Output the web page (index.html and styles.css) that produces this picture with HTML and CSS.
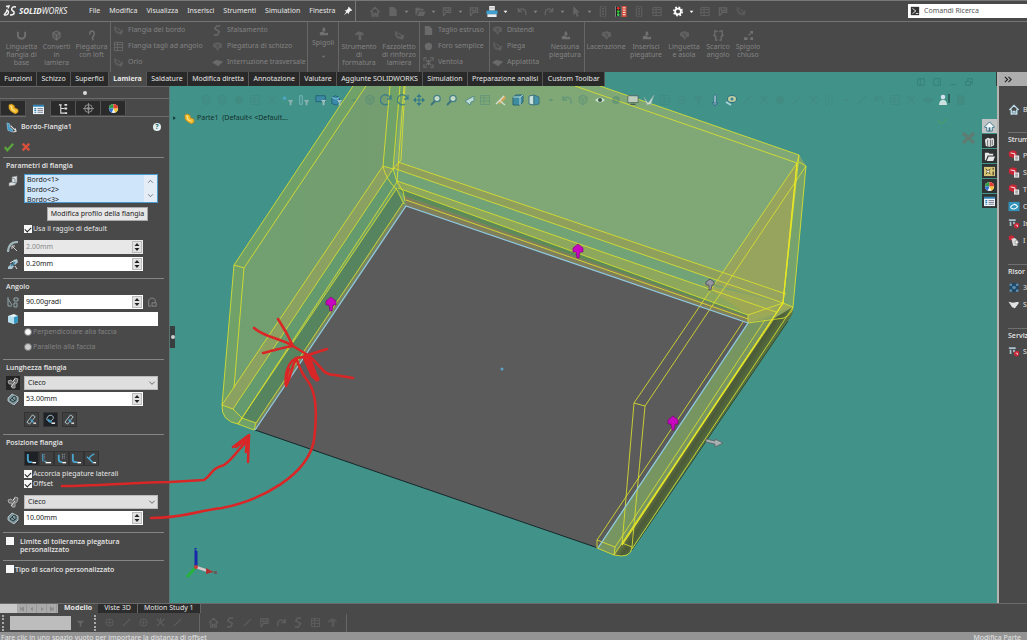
FILE: index.html
```html
<!DOCTYPE html>
<html lang="it">
<head>
<meta charset="utf-8">
<title>SOLIDWORKS</title>
<link rel="stylesheet" href="styles.css">
</head>
<body>
<svg class="defs" aria-hidden="true">
  <symbol id="arr" viewBox="0 0 12 12"><path d="M3.500 5h5L6 8z" fill="currentColor"/></symbol>
  <symbol id="home" viewBox="0 0 12 12"><path d="M1 6.500 6 1.500l5 5M3 6v5h2V8h2v3h2V6" fill="none" stroke="currentColor" stroke-width="1.500"/></symbol>
  <symbol id="file" viewBox="0 0 12 12"><path d="M2 1h5l3 3v7H2z" fill="currentColor"/></symbol>
  <symbol id="open" viewBox="0 0 12 12"><path d="M1 2h4l1 1h4v2H4l-2 5H1zM5 6h7l-2 5H3z" fill="currentColor"/></symbol>
  <symbol id="save" viewBox="0 0 12 12"><path d="M2 10V2h8v5H5L2 11M4 3v2h4V3" fill="none" stroke="currentColor" stroke-width="1.300"/></symbol>
  <symbol id="printer" viewBox="0 0 12 12"><path d="M3 0h6v5H3z" fill="#f4f4f4"/><path d="M0 5h12v4H0z" fill="#3f9fd0"/><path d="M1 9h10v3H1z" fill="#e8eef2"/><path d="M4 1.500h4M4 3h4" stroke="#999" stroke-width=".6"/></symbol>
  <symbol id="undo" viewBox="0 0 12 12"><path d="M2 2v4h4M2 6c3-5 9-3 8 4" fill="none" stroke="currentColor" stroke-width="1.500"/></symbol>
  <symbol id="redo" viewBox="0 0 12 12"><path d="M10 2v4H6M10 6C7 1 1 3 2 10" fill="none" stroke="currentColor" stroke-width="1.500"/></symbol>
  <symbol id="cursor" viewBox="0 0 12 12"><path d="M3 0v10l2.500-2L7 12l2-1-2-4h3z" fill="currentColor"/></symbol>
  <symbol id="lamp" viewBox="0 0 12 12"><rect x="3" y="0" width="6" height="12" rx="2" fill="none" stroke="currentColor"/><circle cx="6" cy="3" r="1" fill="currentColor"/><circle cx="6" cy="6" r="1" fill="currentColor"/><circle cx="6" cy="9" r="1" fill="currentColor"/></symbol>
  <symbol id="traffic" viewBox="0 0 14 12"><rect x="1" y="0" width="6" height="12" rx="1" fill="#1e1e1e" stroke="#bbb" stroke-width=".6"/><circle cx="4" cy="2.500" r="1.500" fill="#e33"/><circle cx="4" cy="6" r="1.500" fill="#3c3"/><circle cx="4" cy="9.500" r="1.500" fill="#4c5"/><rect x="8" y="0" width="5" height="12" fill="#d34b3c"/><path d="M9 2h3M9 4.500h3M9 7h3M9 9.500h3" stroke="#ffe" stroke-width="1"/></symbol>
  <symbol id="sheet" viewBox="0 0 12 12"><path d="M1.500 1.500h9v9h-9zM5 1v10M1 4h9M1 7h9" fill="none" stroke="currentColor"/></symbol>
  <symbol id="gear" viewBox="0 0 12 12"><circle cx="6" cy="6" r="3.200" fill="none" stroke="#fff" stroke-width="2"/><circle cx="6" cy="6" r="4.700" fill="none" stroke="#fff" stroke-width="1.600" stroke-dasharray="1.850 1.850"/></symbol>
  <symbol id="pin" viewBox="0 0 12 12"><path d="M7 1l4 4-1 1-1-.3L7 8v2L2 5h2l2.400-2.200L6 2zM4 7l1 1-4 3z" fill="#f4f4f4"/></symbol>
  <symbol id="blob" viewBox="0 0 12 12"><path d="M2 3l4-2 4 2v5l-4 3-4-3zM2 3l4 2 4-2M6 5v6" fill="currentColor" fill-opacity=".4" stroke="currentColor"/></symbol>
  <symbol id="bend" viewBox="0 0 12 12"><path d="M1 1l3 1v4l6 3v2L3 9 1 5z" fill="currentColor" fill-opacity=".5"/><path d="M5 3l5 5M10 5v3H7" fill="none" stroke="currentColor"/></symbol>
  <symbol id="corner" viewBox="0 0 12 12"><path d="M6 1l2 2v3H5V3zM2 7l3-1 3 2 3-1v3H2z" fill="currentColor"/></symbol>
  <symbol id="tear" viewBox="0 0 12 12"><path d="M1 3l5-2 5 2v4l-3 1-2 3-2-3-3-2z" fill="currentColor" fill-opacity=".6"/><path d="M4 4l3 1-1 3" fill="none" stroke="#494949"/></symbol>
  <symbol id="step" viewBox="0 0 12 12"><path d="M9 1H5L3 4l5 3-2 4H2" fill="none" stroke="currentColor" stroke-width="1.600"/></symbol>
  <symbol id="ubend" viewBox="0 0 12 12"><path d="M2 2v3c0 6 8 6 8 0V2" fill="none" stroke="currentColor" stroke-width="2"/></symbol>
  <symbol id="loft" viewBox="0 0 12 12"><path d="M4 5c0-5 5-5 5-1S5 7 8 11" fill="none" stroke="currentColor" stroke-width="1.600"/></symbol>
  <symbol id="mush" viewBox="0 0 12 12"><path d="M1 6c1-6 9-6 10 0L8 5v6H5V5z" fill="currentColor" fill-opacity=".7"/></symbol>
  <symbol id="flat" viewBox="0 0 12 12"><path d="M0 6l5-3 7 2-5 5z" fill="currentColor"/></symbol>
  <symbol id="relief" viewBox="0 0 12 12"><path d="M4 1H2v4l-1 1 2 1v4h2M8 1h2v4l1 1-2 1v4H7M4 1l1 1M8 1 7 2" fill="none" stroke="currentColor" stroke-width="1.300"/></symbol>
  <symbol id="closed" viewBox="0 0 12 12"><path d="M8 1h3v3H8zM1 8h4v3H1zM8 8h3v3H8zM6 4h2v2H6z" fill="currentColor"/></symbol>
  <symbol id="line" viewBox="0 0 12 12"><path d="M2 10 10 2" stroke="currentColor" stroke-width="1.300"/></symbol>
  <symbol id="ring" viewBox="0 0 12 12"><circle cx="6" cy="6" r="4" fill="none" stroke="currentColor"/><path d="M3 6h6M6 3v6" stroke="currentColor" stroke-width=".8"/></symbol>
  <symbol id="disc" viewBox="0 0 12 12"><circle cx="6" cy="6" r="4" fill="currentColor"/></symbol>
  <symbol id="cross" viewBox="0 0 12 12"><path d="M2 2l8 8M10 2 2 10M6 1v3" stroke="currentColor" stroke-width="1.300"/></symbol>
  <symbol id="fan" viewBox="0 0 12 12"><path d="M1 1h3M8 1h3v3M11 8v3H8M4 11H1V8M1 4V1M3 3l6 6M9 3 3 9M6 3v6" fill="none" stroke="currentColor" stroke-width="1.200"/></symbol>
  <symbol id="funnel" viewBox="0 0 14 12"><circle cx="3" cy="4" r="2" fill="#4da9d0"/><path d="M7 6h6l-2 3v3H9V9z" fill="#9ab8b8"/></symbol>
  <symbol id="fedge" viewBox="0 0 14 12"><path d="M2 1h3v10H2z" fill="none" stroke="#8fc2c8"/><path d="M7 6h6l-2 3v3H9V9z" fill="#9ab8b8"/></symbol>
  <symbol id="fface" viewBox="0 0 14 12"><path d="M1 1h11v7H1z" fill="#3b87a7" stroke="#1d5570"/><path d="M7 6h6l-2 3v3H9V9z" fill="#b4c8cc"/></symbol>
  <symbol id="fbody" viewBox="0 0 14 12"><path d="M1 3l4-2 5 2v6l-4 3-5-2z" fill="#3989b3" stroke="#1d5570"/><path d="M1 3l5 2 4-2" stroke="#a8d6ea" fill="none"/><path d="M7 6h6l-2 3v3H9V9z" fill="#b4c8cc"/></symbol>
  <symbol id="rot" viewBox="0 0 12 12"><path d="M10 4A5 5 0 1 0 8 10M11 1v4H7" fill="none" stroke="#34788e" stroke-width="1.300"/></symbol>
  <symbol id="move" viewBox="0 0 12 12"><path d="M6 0l2.500 3h-2v2.500H9v-2L12 6 9 8.500v-2H6.500V9h2L6 12 3.500 9h2V6.500H3v2L0 6l3-2.500v2h2.500V3h-2z" fill="#26708f"/></symbol>
  <symbol id="mag" viewBox="0 0 12 12"><circle cx="7" cy="4.500" r="3.200" fill="#cfe3da" stroke="#3d7884" stroke-width="1.300"/><path d="M5 7 1 11" stroke="#2d6880" stroke-width="1.800"/></symbol>
  <symbol id="prev" viewBox="0 0 12 12"><path d="M11 2 2 7l5 4 1-3 3-1z" fill="#c8e6e4" stroke="#4f8794"/></symbol>
  <symbol id="paint" viewBox="0 0 12 12"><path d="M3 9l6-8 2 3-6 6z" fill="#e9a550"/><path d="M1 10 9 2M4 6l6 5" stroke="#dfe5d8" stroke-width="1.500"/></symbol>
  <symbol id="cube" viewBox="0 0 12 12"><path d="M1 3l3-2h7v7l-3 3H1z" fill="#3587a7" stroke="#215b70"/><path d="M1 3h7v8M8 3l3-2" stroke="#b9dfe7" fill="none"/></symbol>
  <symbol id="cube2" viewBox="0 0 12 12"><path d="M1 2l5-1v10l-5-1z" fill="#d4ecee" stroke="#356d80"/><path d="M6 1l5 2v7l-5 1z" fill="#3b91b4" stroke="#356d80"/></symbol>
  <symbol id="eye" viewBox="0 0 12 12"><path d="M1 6q5-5 10 0-5 5-10 0z" fill="#d9e9d9"/><circle cx="6" cy="6" r="2" fill="#2f4d42"/></symbol>
  <symbol id="monitor" viewBox="0 0 14 12"><path d="M1 1h12v8H1z" fill="#c7d3cb" stroke="#4c5f57"/><path d="M4 11h6" stroke="#33443d" stroke-width="1.300"/></symbol>
  <symbol id="tickp" viewBox="0 0 12 12"><path d="M1 3l4 6 6-8-3 9-4 1z" fill="#d9e5e3" stroke="#8da6a3" stroke-width=".6"/></symbol>
  <symbol id="vert" viewBox="0 0 12 12"><path d="M5 1h2v10H5zM3 9h6l-3 3z" fill="#d7e8ee" stroke="#1f5d7d" stroke-width=".7"/></symbol>
  <symbol id="look" viewBox="0 0 12 12"><ellipse cx="7" cy="5" rx="4.500" ry="3.500" fill="#d4d8a0" stroke="#2b6884"/><circle cx="7" cy="5" r="1.500" fill="#3c7ea0"/><path d="M1 8l5 3" stroke="#bfe0ea" stroke-width="1.500"/></symbol>
  <symbol id="man" viewBox="0 0 12 12"><circle cx="5" cy="3" r="2.300" fill="#eef"/><path d="M1 11c0-7 8-7 8 0z" fill="#e4eeee"/><path d="M11 0v9" stroke="#1a3c38" stroke-width="1.200"/></symbol>
  <symbol id="part" viewBox="0 0 12 12"><path d="M1 2l3-1 3 2v2l4 2v3l-3 2-5-3-2-3z" fill="#f0b92c" stroke="#b37b12" stroke-width=".6"/><path d="M2 3l2 1v3l4 2" fill="none" stroke="#fff0a8"/></symbol>
  <symbol id="props" viewBox="0 0 12 12"><path d="M0 1h12v10H0z" fill="#eef5fa"/><path d="M0 1h12v2H0z" fill="#2e83b5"/><path d="M1.500 5h2M1.500 7h2M1.500 9h2" stroke="#2e83b5" stroke-width="1.200"/><path d="M5 5h6M5 7h6M5 9h6" stroke="#556" stroke-width=".8"/></symbol>
  <symbol id="tree" viewBox="0 0 12 12"><path d="M1 2h3M3 2v9h4M3 6h4" fill="none" stroke="#ddd" stroke-width="1.200"/><path d="M7 1h3v2H7zM7 5h3v2H7zM7 10h3v2H7z" fill="#ddd"/></symbol>
  <symbol id="target" viewBox="0 0 12 12"><circle cx="6" cy="6" r="4.200" fill="none" stroke="#999"/><circle cx="6" cy="6" r="1.600" fill="none" stroke="#999" stroke-width=".8"/><path d="M6 0v12M0 6h12" stroke="#999" stroke-width=".9"/></symbol>
  <symbol id="ball" viewBox="0 0 12 12"><circle cx="6" cy="6" r="5" fill="#f4f4f4"/><path d="M6 6V1a5 5 0 0 0-5 5z" fill="#2f9e44"/><path d="M6 6V1a5 5 0 0 1 5 5z" fill="#e43d30"/><path d="M6 6H1a5 5 0 0 0 3 4.500z" fill="#2f6fd0"/><path d="M6 6h5a5 5 0 0 1-3 4.500z" fill="#f3c432"/></symbol>
  <symbol id="flange" viewBox="0 0 12 12"><path d="M1 1l3 1v4l3 2v3L2 9z" fill="#3e9bc8" stroke="#a9d6ea" stroke-width=".6"/><path d="M5 4l5 5M8 11l3-1-1-3" fill="none" stroke="#eee" stroke-width="1.100"/></symbol>
  <symbol id="edge" viewBox="0 0 12 12"><path d="M5 2l5-1v6L8 10l-6 1V8l3-1z" fill="#dfe3e6" stroke="#888" stroke-width=".6"/><path d="M5 7l3 1 2-1M5 3l3 1v4" stroke="#83949c" fill="none"/></symbol>
  <symbol id="rad" viewBox="0 0 12 12"><path d="M1 11C1 4 5 1 11 1" fill="none" stroke="#9fb5ba" stroke-width="2.200"/><path d="M10 10 5 5M5 8V5h3" stroke="#ccc" fill="none"/></symbol>
  <symbol id="gap" viewBox="0 0 12 12"><path d="M1 9l3-3 3 2-2 3H1zM7 2l3-1 1 3-3 3-2-2z" fill="#a9c6d2"/><path d="M3 5l5-3M8 8l2 3" stroke="#ddd"/><path d="M4 8l4-4" stroke="#2f7ea4" stroke-width="1.400"/></symbol>
  <symbol id="angle" viewBox="0 0 12 12"><path d="M1 1v9h4M1 3l4 6M7 2h4v3H7zM7 7h3v4H7z" fill="none" stroke="#8fa6aa"/></symbol>
  <symbol id="face" viewBox="0 0 12 12"><path d="M1 3l6-2 4 2v6l-4 2-6-2z" fill="#e8f4f8"/><path d="M7 4v7l4-2V3z" fill="#3597c4"/><path d="M1 3l6 1v7l-6-2z" fill="#b5dfef"/></symbol>
  <symbol id="lock" viewBox="0 0 12 12"><path d="M2 11V5c0-5 8-5 8 0v2M2 11h3M6 7h5v4H6z" fill="none" stroke="#858585" stroke-width="1.200"/></symbol>
  <symbol id="dir" viewBox="0 0 12 12"><path d="M1 4l3-1 2 2 2-4 3 1-1 4-2 1v4H5V7H2z" fill="#6c6c6c" stroke="#bbb" stroke-width=".8"/><path d="M4 10l4-5M6 4l2-2" stroke="#ddd" fill="none"/></symbol>
  <symbol id="depth" viewBox="0 0 12 12"><path d="M1 5l4-4 6 3v4l-4 4-6-4z" fill="#7b939b" stroke="#c3d1d6" stroke-width=".8"/><path d="M3 7l4-4 2 1v3L6 9zM5 5l3 3" stroke="#233" fill="none" stroke-width=".9"/></symbol>
  <symbol id="len" viewBox="0 0 12 12"><path d="M1 9l6-8 3 2-6 8z" fill="none" stroke="#b6ccd4"/><path d="M5 6l3 3" stroke="#3d9fcb" stroke-width="1.600"/><path d="M8 10h3" stroke="#fff" stroke-width="1.300"/></symbol>
  <symbol id="len2" viewBox="0 0 12 12"><path d="M2 6c0-6 8-6 7-1L5 9z" fill="none" stroke="#b6ccd4"/><path d="M3 6l4 3" stroke="#3d9fcb" stroke-width="2"/><path d="M7 10h4" stroke="#fff" stroke-width="1.500"/></symbol>
  <symbol id="pos" viewBox="0 0 12 12"><path d="M2 1v6q0 3 3 3h2" fill="none" stroke="#4aa5cf" stroke-width="2"/><path d="M7 10.500h4" stroke="#fff" stroke-width="1.500"/></symbol>
  <symbol id="posb" viewBox="0 0 12 12"><path d="M2 1v8M3 9h3" fill="none" stroke="#4aa5cf" stroke-width="1.300"/><path d="M4 1v6" stroke="#889" stroke-dasharray="1 1"/><path d="M5 10.500h6" stroke="#fff" stroke-width="1.500"/></symbol>
  <symbol id="posc" viewBox="0 0 12 12"><path d="M3 2v5q0 3 4 3" fill="none" stroke="#4aa5cf" stroke-width="2"/><path d="M7 1v6M9 1v6" stroke="#9ab" stroke-dasharray="1 1"/><path d="M7 10.500h4" stroke="#fff" stroke-width="1.500"/></symbol>
  <symbol id="pos2" viewBox="0 0 12 12"><path d="M9 1C3 4 3 6 5 8l3 3M1 4l6 6" fill="none" stroke="#4aa5cf" stroke-width="1.500"/><path d="M8 10.500h3" stroke="#fff" stroke-width="1.500"/></symbol>
  <symbol id="books" viewBox="0 0 12 12"><path d="M1 4l3-2 3 1 3-1 1 2v6l-4 2-5-1z" fill="#e5e5e5"/><path d="M4 4v7M7 4v8M9 4v6" stroke="#444" stroke-width=".8"/></symbol>
  <symbol id="pal" viewBox="0 0 12 12"><path d="M0 1h12v10H0z" fill="#d9c878"/><path d="M2 3l5 6M7 3 2 9" stroke="#403b20" fill="none"/><circle cx="4.500" cy="6" r="1.500" fill="#fff" stroke="#403b20" stroke-width=".6"/><path d="M10 2v2M10 6v4" stroke="#403b20" stroke-width="1.300"/></symbol>
  <symbol id="redcube" viewBox="0 0 14 12"><path d="M1 2l4-2 5 1v6l-4 2-5-2z" fill="#c92636"/><path d="M3 3l5 1v3" stroke="#fff" fill="none"/><path d="M7 6h6v6H7z" fill="#e7e7e7"/><path d="M8.500 8h3M8.500 10h3" stroke="#555" stroke-width=".8"/></symbol>
  <symbol id="install" viewBox="0 0 14 12"><path d="M1 1h8v2H1zM2 4h2v5H2zM6 4h2v3H6z" fill="#a9c2cc"/><path d="M7 7l3-2 3 1v4l-3 2-3-2z" fill="#c92636"/><path d="M9 8h2v2" stroke="#fff" fill="none" stroke-width=".8"/></symbol>
  <symbol id="parts" viewBox="0 0 14 12"><path d="M1 1l3-1 3 1v4L4 6 1 5z" fill="#c92636"/><path d="M4 4l4-1 3 3v6H6z" fill="#dcdcdc"/><circle cx="10" cy="8" r="2" fill="#f4f4f4" stroke="#777" stroke-width=".8"/></symbol>
  <symbol id="cloud" viewBox="0 0 12 12"><path d="M0 1h12v10H0z" fill="#3395bd"/><path d="M2 7q4-6 8-1-4 5-8 1" fill="none" stroke="#fff" stroke-width="1.200"/></symbol>
  <symbol id="globe" viewBox="0 0 12 12"><circle cx="6" cy="6" r="5" fill="#1d4666"/><circle cx="6" cy="6" r="2" fill="#5b8caf"/><circle cx="2.500" cy="3" r="1.500" fill="#5b8caf"/><circle cx="9.500" cy="3" r="1.500" fill="#5b8caf"/><circle cx="2.500" cy="9.500" r="1.500" fill="#5b8caf"/><circle cx="9.500" cy="9.500" r="1.500" fill="#5b8caf"/></symbol>
  <symbol id="hand" viewBox="0 0 12 12"><path d="M0 3l5 1 6-1v2l-4 5-3-1z" fill="#e2e2e2"/></symbol>
  <symbol id="chev" viewBox="0 0 12 12"><path d="M2 4l4 4 4-4" fill="none" stroke="#555" stroke-width="1.300"/></symbol>
  <symbol id="tri-up" viewBox="0 0 8 5"><path d="M4 1l2.500 3h-5z" fill="#222"/></symbol>
  <symbol id="tri-dn" viewBox="0 0 8 5"><path d="M4 4l2.500-3h-5z" fill="#222"/></symbol>
</svg>

<div class="app">
  <header class="titlebar">
    <div class="brand">
      <svg class="ds" viewBox="0 0 14 12"><path d="M3 1.500 6 1 5 3.500M1 10c5 1 6-5 2-5M1 10l3-4M13 2C8 1 8 5 10 6s2 4-3 4" fill="none" stroke="#f2f2f2" stroke-width="1.400"/></svg>
      <span class="logo"><b>SOLID</b>WORKS</span>
    </div>
    <nav class="menu"><a href="#">File</a><a href="#">Modifica</a><a href="#">Visualizza</a><a href="#">Inserisci</a><a href="#">Strumenti</a><a href="#">Simulation</a><a href="#">Finestra</a></nav>
    <svg class="i pin"><use href="#pin"/></svg>
    <div class="quick">
      <div class="qgroup"><svg><use href="#home"/></svg><svg><use href="#file"/></svg><svg class="a"><use href="#arr"/></svg><svg><use href="#open"/></svg><svg class="a"><use href="#arr"/></svg><svg><use href="#save"/></svg><svg class="a"><use href="#arr"/></svg><svg><use href="#save"/></svg><svg><use href="#printer"/></svg><svg class="a on"><use href="#arr"/></svg></div>
      <div class="qgroup"><svg><use href="#undo"/></svg><svg class="a"><use href="#arr"/></svg><svg><use href="#redo"/></svg><svg class="a"><use href="#arr"/></svg><svg><use href="#cursor"/></svg><svg class="a"><use href="#arr"/></svg><svg><use href="#lamp"/></svg><svg><use href="#traffic"/></svg><svg><use href="#lamp"/></svg><svg><use href="#sheet"/></svg></div>
      <div class="qgroup"><svg><use href="#gear"/></svg><svg class="a on"><use href="#arr"/></svg><svg><use href="#sheet"/></svg><svg><use href="#save"/></svg><svg><use href="#bend"/></svg></div>
    </div>
    <label class="search"><svg viewBox="0 0 12 12"><path d="M1 1h10v10H1z" fill="#333"/><path d="M3 3l4 3-4 3M7 9h3" stroke="#fff" fill="none"/></svg><input type="text" value="Comandi Ricerca" aria-label="Comandi Ricerca"></label>
  </header>

  <div class="ribbon">
    <div class="group g-base"><button><svg><use href="#ubend"/></svg>Linguetta<br>flangia di<br>base</button><button><svg><use href="#blob"/></svg>Converti<br>in<br>lamiera</button><button><svg><use href="#loft"/></svg>Piegatura<br>con loft</button></div>
    <div class="group g-flange">
      <div class="stack"><button><svg><use href="#bend"/></svg>Flangia del bordo</button><button><svg><use href="#sheet"/></svg>Flangia tagli ad angolo</button><button><svg><use href="#bend"/></svg>Orlo</button></div>
      <div class="stack"><button><svg><use href="#step"/></svg>Sfalsamento</button><button><svg><use href="#tear"/></svg>Piegatura di schizzo</button><button><svg><use href="#flat"/></svg>Interruzione trasversale</button></div>
    </div>
    <div class="group g-one"><button><svg><use href="#corner"/></svg>Spigoli<svg class="drop"><use href="#arr"/></svg></button></div>
    <div class="group g-two"><button><svg><use href="#mush"/></svg>Strumento<br>di<br>formatura</button><button><svg><use href="#bend"/></svg>Fazzoletto<br>di rinforzo<br>lamiera</button></div>
    <div class="group g-list"><div class="stack"><button><svg><use href="#file"/></svg>Taglio estruso</button><button><svg><use href="#disc"/></svg>Foro semplice</button><button><svg><use href="#fan"/></svg>Ventola</button></div></div>
    <div class="group g-fold"><div class="stack"><button><svg><use href="#tear"/></svg>Distendi</button><button><svg><use href="#bend"/></svg>Piega</button><button><svg><use href="#flat"/></svg>Appiattita</button></div><button><svg><use href="#corner"/></svg>Nessuna<br>piegatura</button></div>
    <div class="group g-last"><button><svg><use href="#tear"/></svg>Lacerazione</button><button><svg><use href="#corner"/></svg>Inserisci<br>piegature</button><button><svg><use href="#tear"/></svg>Linguetta<br>e asola</button><button><svg><use href="#relief"/></svg>Scarico<br>angolo</button><button><svg><use href="#closed"/></svg>Spigolo<br>chiuso</button></div>
  </div>

  <main class="work">
    <div class="center">
      <div class="tabrow">
        <nav class="tabs"><a href="#">Funzioni</a><a href="#">Schizzo</a><a href="#">Superfici</a><a href="#" class="sel">Lamiera</a><a href="#">Saldature</a><a href="#">Modifica diretta</a><a href="#">Annotazione</a><a href="#">Valutare</a><a href="#">Aggiunte SOLIDWORKS</a><a href="#">Simulation</a><a href="#">Preparazione analisi</a><a href="#">Custom Toolbar</a></nav>
        <div class="winctl"><svg viewBox="0 0 12 12"><path d="M1 1h10v10H1zM5 1v10" fill="none" stroke="currentColor"/></svg><svg viewBox="0 0 12 12"><path d="M1 1h10v10H1zM7 4l2 2-2 2" fill="none" stroke="currentColor"/></svg><svg viewBox="0 0 12 12"><path d="M2 10h8" stroke="currentColor"/></svg><svg viewBox="0 0 12 12"><path d="M1 5h7v6H1zM4 5V1h7v7H8" fill="none" stroke="currentColor"/></svg></div>
      </div>
      <div class="stage">
        <aside class="panel">
          <div class="strip"><i></i></div>
          <div class="ptabs"><button aria-label="Feature"><svg><use href="#part"/></svg></button><button class="sel" aria-label="Proprietà"><svg><use href="#props"/></svg></button><button aria-label="Configurazioni"><svg><use href="#tree"/></svg></button><button aria-label="Quote"><svg><use href="#target"/></svg></button><button aria-label="Aspetto"><svg><use href="#ball"/></svg></button></div>
          <div class="ptitle"><svg><use href="#flange"/></svg><b>Bordo-Flangia1</b><button class="help">?</button></div>
          <div class="okrow"><button aria-label="OK"><svg viewBox="0 0 12 12"><path d="M1 6l3 4 7-8" fill="none" stroke="#5ba53c" stroke-width="2.600"/></svg></button><button aria-label="Annulla"><svg viewBox="0 0 12 12"><path d="M2 2l8 8M10 2l-8 8" stroke="#d8503c" stroke-width="2.800"/></svg></button></div>

          <section>
            <h2>Parametri di flangia</h2>
            <div class="row top"><svg class="ic"><use href="#edge"/></svg>
              <div class="list"><ul role="listbox" aria-label="Bordi"><li>Bordo&lt;1&gt;</li><li>Bordo&lt;2&gt;</li><li>Bordo&lt;3&gt;</li></ul><div class="bar"><svg class="up"><use href="#chev"/></svg><svg><use href="#chev"/></svg></div></div></div>
            <button class="profile">Modifica profilo della flangia</button>
            <label class="tick"><input type="checkbox" checked>Usa il raggio di default</label>
            <div class="row gap-m"><svg class="ic"><use href="#rad"/></svg><div class="spin off"><input type="text" value="2.00mm" aria-label="Raggio" disabled><span><button aria-label="Su"><svg><use href="#tri-up"/></svg></button><button aria-label="Giù"><svg><use href="#tri-dn"/></svg></button></span></div></div>
            <div class="row gap-s"><svg class="ic"><use href="#gap"/></svg><div class="spin"><input type="text" value="0.20mm" aria-label="Distanza"><span><button aria-label="Su"><svg><use href="#tri-up"/></svg></button><button aria-label="Giù"><svg><use href="#tri-dn"/></svg></button></span></div></div>
          </section>

          <section>
            <h2>Angolo</h2>
            <div class="row"><svg class="ic"><use href="#angle"/></svg><div class="spin"><input type="text" value="90.00gradi" aria-label="Angolo"><span><button aria-label="Su"><svg><use href="#tri-up"/></svg></button><button aria-label="Giù"><svg><use href="#tri-dn"/></svg></button></span></div><svg class="lock"><use href="#lock"/></svg></div>
            <div class="row gap-s"><svg class="ic"><use href="#face"/></svg><input class="plain" type="text" aria-label="Faccia"></div>
            <label class="tick radio"><input type="radio" name="f" disabled>Perpendicolare alla faccia</label>
            <label class="tick radio second"><input type="radio" name="f" disabled>Parallelo alla faccia</label>
          </section>

          <section>
            <h2>Lunghezza flangia</h2>
            <div class="row"><button class="ic dark" aria-label="Direzione"><svg><use href="#dir"/></svg></button><div class="pick"><select aria-label="Lunghezza"><option>Cieco</option></select><svg><use href="#chev"/></svg></div></div>
            <div class="row gap-x"><svg class="ic"><use href="#depth"/></svg><div class="spin"><input type="text" value="53.00mm" aria-label="Profondità"><span><button aria-label="Su"><svg><use href="#tri-up"/></svg></button><button aria-label="Giù"><svg><use href="#tri-dn"/></svg></button></span></div></div>
            <div class="btns wide"><button aria-label="Esterna"><svg><use href="#len"/></svg></button><button class="sel" aria-label="Interna"><svg><use href="#len2"/></svg></button><button aria-label="Tangente"><svg><use href="#len"/></svg></button></div>
          </section>

          <section>
            <h2>Posizione flangia</h2>
            <div class="btns"><button class="sel" aria-label="Posizione 1"><svg><use href="#pos"/></svg></button><button aria-label="Posizione 2"><svg><use href="#posb"/></svg></button><button aria-label="Posizione 3"><svg><use href="#posc"/></svg></button><button aria-label="Posizione 4"><svg><use href="#pos"/></svg></button><button aria-label="Posizione 5"><svg><use href="#pos2"/></svg></button></div>
            <label class="tick"><input type="checkbox" checked>Accorcia piegature laterali</label>
            <label class="tick tight"><input type="checkbox" checked>Offset</label>
            <div class="row gap-m"><button class="ic" aria-label="Direzione offset"><svg><use href="#dir"/></svg></button><div class="pick"><select aria-label="Offset"><option>Cieco</option></select><svg><use href="#chev"/></svg></div></div>
            <div class="row gap-x"><svg class="ic"><use href="#depth"/></svg><div class="spin"><input type="text" value="10.00mm" aria-label="Distanza di offset"><span><button aria-label="Su"><svg><use href="#tri-up"/></svg></button><button aria-label="Giù"><svg><use href="#tri-dn"/></svg></button></span></div></div>
          </section>

          <section class="opt"><label><input type="checkbox"><b class="inset">Limite di tolleranza piegatura personalizzato</b></label></section>
          <section class="opt"><label><input type="checkbox"><b>Tipo di scarico personalizzato</b></label></section>
        </aside>

        <div class="view">
          <svg class="model" viewBox="170 86 827 517" preserveAspectRatio="xMinYMin slice">
            <defs>
              <linearGradient id="roll" gradientUnits="userSpaceOnUse" x1="690" y1="428" x2="713" y2="443"><stop offset="0" stop-color="#808f51"/><stop offset=".45" stop-color="#4b5a38"/><stop offset="1" stop-color="#5f8146"/></linearGradient>
              <linearGradient id="lf" x1="0" y1="0" x2="1" y2="0"><stop offset="0" stop-color="#71a070"/><stop offset="1" stop-color="#749d70"/></linearGradient>
            </defs>
            <path d="M353 86 234 265 222 405Q221 421 238 424L255 430 406 206 404 86z" fill="#70a169"/>
            <path d="M366 86 244 268 234 388 383 166 390 86z" fill="url(#lf)"/>
            <path d="M222 405 383 166 393 169 233 409z" fill="#8ba162"/>
            <path d="M233 409 393 169 397 182 242 418z" fill="#659a6e"/>
            <path d="M242 418 397 188 403 203 256 423z" fill="#55845f"/>
            <path d="M256 423 403 203 406 206 255 430z" fill="#788760"/>
            <path d="M404 86H600L799 155 806 166 793 307 748 323 406 206 393 169z" fill="#7fa876"/>
            <path d="M398 162 784 293 783 303 393 168z" fill="#8f9f5c"/>
            <path d="M393 168 783 303 776 312 397 181z" fill="#72a377"/>
            <path d="M397 181 776 312 748 315 398 188z" fill="#8da75c"/>
            <path d="M398 188 748 315 748 318 404 196z" fill="#5c8a58"/>
            <path d="M404 196 748 317 748 323 406 206z" fill="#807e5b"/>
            <path d="M797 163 715 285 783 303z" fill="#96a45d"/>
            <path d="M701 283 783 303 793 307Q792 318 748 323V315z" fill="#a2a952" opacity=".8"/>
            <path d="M799 155 806 166 793 307 783 303z" fill="#76a36d"/>
            <path d="M406 206 748 323 598 548 255 430z" fill="#5b5b5b"/>
            <path d="M748 323 773 318 614 555 597 548z" fill="#779560"/>
            <path d="M773 319 793 307Q794 315 788 321L632 548Q630 558 614 555z" fill="url(#roll)"/>
            <path d="M255 430 598 548" stroke="#16272a" fill="none"/>
            <path d="M632 550 788 321" stroke="#34472b" fill="none"/>
            <g fill="none" stroke="#dce02e" stroke-width="1" stroke-opacity=".85">
              <path d="M353 86 234 265 222 405Q221 421 238 424L254 430 256 423 242 418 238 424M366 86 244 268 234 388M234 265 244 268M222 405 383 166 390 86M222 405 233 409 242 418M233 409 393 169 400 86M238 424 397 182 404 86M242 418 397 188M256 423 403 203M383 166 393 169 397 182 403 191 405 201M383 166Q385 178 397 190L404 204M393 169 401 160 405 86"/>
              <path d="M600 86 799 155 783 303M575 86 797 163 799 155M799 162 806 166 793 307Q792 314 784 318L748 323 748 315 783 303 793 307M797 163 783 303M398 162 786 294M393 168 783 303M397 181 776 312M398 188 748 315M406 200 748 319"/>
              <path d="M797 163 634 403 622 545M806 166 645 406 632 547M634 403 645 406M597 540 615 547 614 555 597 548zM614 555Q631 559 632 547L622 543M597 540 743 322M615 547 765 320M614 555 773 320M632 549 793 307M622 543 783 303"/>
            </g>
            <path d="M622 545 783 303 797 163" stroke="#e8e625" stroke-width="1.300" fill="none"/>
            <path d="M255 430 406 206 748 323 598 548" fill="none" stroke="#8fc8e0" stroke-width="1.300"/>
            <g fill="#c808c0" stroke="#750071" stroke-width=".6"><path id="mk" d="M331 297l5 4v4h-3l-1 6h-2l-1-6h-3v-4z"/><use href="#mk" x="247" y="-53"/><use href="#mk" x="342" y="119"/></g>
            <path d="M710 279l4 3v3h-2l-1 5h-2v-5h-3v-3z" fill="#9696a0" stroke="#494950" stroke-width=".8"/>
            <path d="M706 439l9 2v-2l8 4-8 4v-3l-9-2z" fill="#a8b0b2" stroke="#596365" stroke-width=".8"/>
            <circle cx="502" cy="369" r="1.500" fill="#5aa3c8"/>
            <path d="M196 567V551" stroke="#1828a8" stroke-width="3"/><path d="M196 567 187 577" stroke="#26b33c" stroke-width="3"/><path d="M196 567 211 572" stroke="#d8c8c8" stroke-width="2.500"/><path d="M206 568l8 4-8 2z" fill="#a33"/><circle cx="196" cy="567" r="2" fill="#c43c3c"/><text x="194" y="551" class="axis z">z</text><text x="214" y="574" class="axis x">x</text>
            <path d="M938 120l3 4 6-5" stroke="#4a9a70" stroke-width="1.500" fill="none"/><path d="M963 133l11 10M974 133l-11 10" stroke="#5f7b72" stroke-width="3.500"/>
          </svg>
          <div class="hud">
            <svg><use href="#blob"/></svg><svg><use href="#blob"/></svg><svg><use href="#disc"/></svg><svg><use href="#sheet"/></svg><svg><use href="#cross"/></svg><svg class="c"><use href="#funnel"/></svg><svg class="c"><use href="#fedge"/></svg><svg class="c"><use href="#fface"/></svg><svg class="c"><use href="#fbody"/></svg><svg><use href="#arr"/></svg><svg><use href="#blob"/></svg><svg class="c"><use href="#rot"/></svg><svg class="c"><use href="#rot"/></svg><svg class="c"><use href="#move"/></svg><svg class="c"><use href="#mag"/></svg><svg class="c"><use href="#mag"/></svg><svg class="c"><use href="#prev"/></svg><svg><use href="#sheet"/></svg><svg class="c"><use href="#paint"/></svg><svg class="c"><use href="#cube"/></svg><svg class="c"><use href="#cube2"/></svg><svg><use href="#arr"/></svg><svg><use href="#undo"/></svg><svg><use href="#blob"/></svg><svg class="c"><use href="#eye"/></svg><svg><use href="#disc"/></svg><svg class="c"><use href="#monitor"/></svg><svg class="c"><use href="#tickp"/></svg><svg><use href="#sheet"/></svg><svg><use href="#ring"/></svg><svg><use href="#mush"/></svg><svg class="c"><use href="#vert"/></svg><svg class="c"><use href="#look"/></svg><svg><use href="#line"/></svg><svg><use href="#cross"/></svg><svg><use href="#disc"/></svg><svg><use href="#line"/></svg><svg><use href="#cross"/></svg><svg><use href="#lamp"/></svg><svg><use href="#arr"/></svg><svg><use href="#line"/></svg><svg><use href="#undo"/></svg><svg><use href="#sheet"/></svg><svg><use href="#cross"/></svg><svg><use href="#flat"/></svg><svg class="c"><use href="#man"/></svg><svg><use href="#file"/></svg>
          </div>
          <div class="crumb"><svg class="tri" viewBox="0 0 8 8"><path d="M2 1l4 3-4 3z" fill="#12302d"/></svg><svg><use href="#part"/></svg>Parte1&nbsp; (Default&lt; &lt;Default...</div>
          <div class="handle"></div>
          <div class="sidetabs"><button class="sel" aria-label="Home"><svg viewBox="0 0 12 12"><path d="M1 6 6 1l5 5v1H9v4H3V7H1z" fill="#f4f8fa" stroke="#356f86"/><path d="M5 7h2v4H5z" fill="#356f86"/></svg></button><button aria-label="Libreria"><svg><use href="#books"/></svg></button><button aria-label="Esplora file"><svg class="lt"><use href="#open"/></svg></button><button aria-label="Tavolozza"><svg><use href="#pal"/></svg></button><button aria-label="Aspetti"><svg><use href="#ball"/></svg></button><button aria-label="Proprietà personalizzate"><svg><use href="#props"/></svg></button></div>
        </div>
      </div>
    </div>
    <aside class="task">
      <button class="collapse" aria-label="Comprimi"><svg viewBox="0 0 10 10"><path d="M1 2l3 3-3 3M5 2l3 3-3 3" fill="none" stroke="#222" stroke-width="1.200"/></svg></button>
      <div class="item first"><svg class="hm"><use href="#home"/></svg>B</div>
      <section><h3>Strum</h3><div class="item"><svg><use href="#redcube"/></svg>P</div><div class="item"><svg><use href="#redcube"/></svg>S</div><div class="item"><svg><use href="#redcube"/></svg>T</div><div class="item"><svg><use href="#cloud"/></svg>C</div><div class="item"><svg><use href="#install"/></svg>In</div><div class="item"><svg><use href="#parts"/></svg>I</div></section>
      <section><h3>Risor</h3><div class="item"><svg><use href="#globe"/></svg>3</div><div class="item"><svg><use href="#hand"/></svg>S</div></section>
      <section><h3>Serviz</h3><div class="item"><svg><use href="#install"/></svg>S</div></section>
    </aside>
    <svg class="notes" viewBox="0 72 400 531" fill="none" stroke="#d92626" stroke-width="2.600" stroke-linecap="round" stroke-linejoin="round" aria-hidden="true">
      <path d="M62 486C100 486 120 483 170 482L204 480C213 474 210 469 224 465 232 460 236 452 247 441"/>
      <path d="M233 447 249 435 248 462M236 447 247 439 246 452"/>
      <path d="M151 518C185 518 195 511 222 508 262 500 308 475 314 440 318 410 315 390 307 380 300 371 299 365 296 358"/>
      <path d="M254 328C266 338 280 338 293 346L311 357M278 319C284 328 289 337 293 346 284 347 273 351 263 353M327 349 308 355C322 366 322 375 335 375L353 378M308 356 317 380 312 376 304 358M309 356 315 372M308 357C298 357 296 358 292 361 286 368 285 378 286 386 290 379 291 370 295 361M286 380 289 369"/>
      <path d="M306 356 312 370 317 379" stroke-width="5"/>
    </svg>
  </main>

  <div class="doctabs"><span class="blank"></span><span class="nav"><button aria-label="Primo"><svg viewBox="0 0 8 8"><path d="M6 1 3 4l3 3zM2 1v6" fill="#888" stroke="#888"/></svg></button><button aria-label="Precedente"><svg viewBox="0 0 8 8"><path d="M5 1 2 4l3 3z" fill="#888"/></svg></button><button aria-label="Successivo"><svg viewBox="0 0 8 8"><path d="M3 1l3 3-3 3z" fill="#888"/></svg></button><button aria-label="Ultimo"><svg viewBox="0 0 8 8"><path d="M2 1l3 3-3 3zM6 1v6" fill="#888" stroke="#888"/></svg></button></span><a href="#" class="sel">Modello</a><a href="#">Viste 3D</a><a href="#">Motion Study 1</a></div>
  <div class="sketchbar">
    <span class="grip"></span><select aria-label="Stile"><option></option></select><svg class="filter" viewBox="0 0 12 12"><path d="M1 3h10L7 7v4H5V7z" fill="#666"/></svg><span class="grip"></span>
    <div class="sk first"><svg><use href="#ring"/></svg><svg><use href="#line"/></svg><svg><use href="#ring"/></svg><svg><use href="#cross"/></svg><svg><use href="#line"/></svg></div>
    <div class="sk"><svg><use href="#home"/></svg><svg><use href="#step"/></svg><svg><use href="#line"/></svg><svg><use href="#save"/></svg><svg><use href="#redo"/></svg><svg><use href="#step"/></svg><svg><use href="#sheet"/></svg><svg><use href="#mush"/></svg></div>
  </div>
  <footer class="status"><span>Fare clic in uno spazio vuoto per importare la distanza di offset</span><span>Modifica Parte</span></footer>
</div>
</body>
</html>
```

FILE: styles.css
```css
* { box-sizing: border-box; }
body, h2, h3, ul { margin: 0; padding: 0; }
body, button, input, select { font: 7px/8px "Noto Sans", "Open Sans", sans-serif; }
body { background: #494949; color: #e6e6e6; }
button { background: none; border: 0; padding: 0; color: inherit; }
a { color: inherit; text-decoration: none; }
svg { display: block; flex: none; width: 12px; height: 12px; }
.defs { position: absolute; width: 0; height: 0; }
.app { height: 100vh; display: grid; grid-template-rows: 22px 50px 1fr 10px 19px 8px; grid-template-columns: minmax(0, 1fr); overflow: hidden; }

.titlebar { display: flex; align-items: center; border-top: 1px solid #777; border-bottom: 1px solid #747474; white-space: nowrap; }
.brand { display: flex; align-items: center; width: 89px; padding-left: 3px; gap: 2px; color: #f2f2f2; }
.ds { width: 14px; }
.logo { font: italic 8px/12px "Noto Sans", sans-serif; }
.menu { display: flex; gap: 9px; }
.pin { width: 10px; height: 10px; margin: 0 2px 0 7px; }
.quick { display: flex; gap: 3px; flex: 1; align-self: stretch; align-items: center; border-left: 1px solid #777; padding-left: 10px; color: #646464; }
.qgroup { display: flex; }
.quick svg { width: 18px; height: 11px; }
.quick .a { width: 9px; color: #888; }
.quick .on { color: #fff; }
.search { display: flex; align-items: center; gap: 4px; width: 119px; height: 14px; padding-left: 2px; background: #fff; }
.search svg { width: 10px; height: 10px; }
.search input { border: 0; padding: 0; width: 96px; color: #555; background: none; }

.ribbon { display: grid; grid-template-columns: 111px 197px 31px 81px 70px 95px 1fr; color: #838383; white-space: nowrap; }
.group { display: flex; border-right: 1px solid #666; }
.group:last-child { border-right: 0; }
.group > button { width: 40px; padding-top: 8px; text-align: center; align-self: flex-start; }
.group > button svg { width: 11px; height: 11px; margin: 0 auto 2px; color: #717171; }
.g-base { padding-left: 4px; }
.g-base > button { width: 35px; }
.g-one > button { width: 30px; padding-top: 4px; }
.g-one > button .drop { margin: 5px auto 0; width: 9px; height: 9px; }
.g-fold > button { width: 38px; }
.g-last > button { width: 38px; }
.g-last > button:first-child { width: 42px; }
.g-last > button:nth-child(n+4) { width: 30px; }
.stack { display: flex; flex-direction: column; padding-left: 2px; }
.g-flange .stack:first-child { width: 99px; }
.g-fold .stack { width: 56px; }
.g-list .stack { padding-left: 3px; }
.stack button { display: flex; align-items: center; gap: 4px; height: 16px; }
.stack svg { width: 11px; height: 11px; color: #6a6a6a; }

.work { position: relative; display: flex; min-height: 0; overflow: hidden; }
.center { flex: 1; min-width: 0; display: flex; flex-direction: column; }
.tabrow { display: flex; justify-content: space-between; height: 14px; background: #41938a; }
.tabs { display: flex; min-width: 605px; background: #292929; white-space: nowrap; }
.tabs a { flex: 1 0 auto; padding: 0 4px; border-right: 1px solid #555; line-height: 14px; text-align: center; }
.tabs .sel { background: #494949; font-weight: bold; }
.winctl { display: flex; align-items: center; gap: 8px; margin: 5px 24px 0 0; color: #347870; }
.winctl svg { width: 8px; height: 8px; }
.stage { flex: 1; display: flex; min-height: 0; }

.panel { flex: none; width: 170px; background: #494949; border-right: 1px solid #5a7672; }
.strip { height: 13px; border-top: 1px solid #666; border-bottom: 1px solid #6c6c6c; display: grid; place-items: center; }
.strip i { width: 4px; height: 4px; border-radius: 50%; background: #ddd; }
.ptabs { display: flex; height: 18px; padding: 2px 0 0 1px; border-bottom: 1px solid #6c6c6c; }
.ptabs button { width: 25px; margin-bottom: 1px; background: #2b2b2b; border-right: 1px solid #555; display: grid; place-items: center; }
.ptabs .sel { background: #494949; margin-bottom: -1px; }
.ptabs svg { width: 11px; height: 11px; }
.ptitle { display: flex; align-items: center; gap: 4px; height: 20px; padding: 0 8px 0 6px; }
.ptitle svg { width: 11px; height: 11px; }
.help { margin-left: auto; width: 8px; height: 8px; border-radius: 50%; background: #e4f0f0; color: #276868; font-weight: bold; }
.okrow { display: flex; gap: 7px; height: 20px; padding: 2px 4px; }
.okrow svg { width: 10px; height: 10px; }
section { border-top: 1px solid #858585; margin: 0 5px 0 3px; padding-bottom: 7px; }
h2 { font: 600 7px/16px "Open Sans", sans-serif; padding-left: 3px; }
b { font: 600 7px/8px "Open Sans", sans-serif; }
.logo b { font: italic bold 8px/12px "Noto Sans", sans-serif; }
.row { display: flex; align-items: center; padding: 0 6px 0 3px; }
.row.top { align-items: flex-start; }
.gap-x { margin-top: 2px; }
.gap-s { margin-top: 3px; }
.gap-m { margin-top: 6px; }
.ic { width: 14px; height: 14px; margin-right: 4px; padding: 1px; flex: none; }
.dark { background: #242424; }
.list { flex: 1; display: flex; height: 29px; background: #cfe5fa; border: 1px solid #4a9bd0; overflow: hidden; }
.list ul { flex: 1; list-style: none; padding-left: 2px; color: #222; }
.list li { height: 10px; line-height: 10px; }
.bar { width: 13px; background: #e4edf6; display: flex; flex-direction: column; justify-content: space-between; align-items: center; padding: 3px 0; }
.bar svg { width: 7px; height: 7px; }
.up { transform: rotate(180deg); }
.profile { display: block; margin: 4px 0 0 44px; width: 101px; height: 14px; background: #e6e6e6; border: 1px solid #aaa; color: #222; white-space: nowrap; }
.tick { display: flex; align-items: center; gap: 1px; height: 10px; margin: 3px 0 0 21px; white-space: nowrap; }
.tick.tight { margin-top: 0; }
.tick.radio { margin-top: 1px; color: #838383; }
.tick.radio.second { margin-top: 5px; }
input[type="checkbox"], input[type="radio"] { appearance: none; flex: none; width: 8px; height: 8px; margin: 0; background: #f8f8f8; display: grid; place-items: center; }
input[type="radio"] { border-radius: 50%; border: 1px solid #777; }
.second input[type="radio"] { background: #ccc; }
input[type="checkbox"]:checked::before { content: ""; width: 5px; height: 3px; border: solid #222; border-width: 0 0 1px 1px; transform: rotate(-45deg); }
.spin { width: 119px; height: 14px; display: flex; background: #fff; }
.spin input { flex: 1; min-width: 0; border: 0; padding: 0 2px; background: none; color: #222; }
.spin.off { background: #e8e8e8; }
.spin.off input { color: #888; }
.spin span { width: 10px; margin: 1px; background: #e2e2e2; border: 1px solid #bbb; display: flex; flex-direction: column; }
.spin button { height: 5px; }
.spin svg { width: 8px; height: 5px; }
.lock { width: 10px; height: 10px; margin-left: 4px; }
.plain { flex: 1; min-width: 0; height: 14px; border: 0; background: #fff; }
.pick { position: relative; flex: 1; height: 14px; }
.pick select { appearance: none; width: 100%; height: 14px; padding: 0 3px; border: 1px solid #bbb; border-radius: 0; background: #dfdfdf; color: #222; }
.pick svg { position: absolute; right: 2px; top: 3px; width: 8px; height: 8px; }
.btns { display: flex; margin-left: 21px; }
.btns button { width: 15px; height: 15px; border: 1px solid #333; background: #404040; padding: 1px; }
.btns svg { width: 11px; height: 11px; }
.btns .sel { background: #1e2226; }
.btns.wide { margin-top: 6px; gap: 4px; }
.opt { padding: 4px 0 6px 3px; }
.opt label { display: flex; gap: 1px; }
.opt b { max-width: 110px; padding-top: 1px; }
.opt b.inset { margin-left: 5px; }

.view { position: relative; flex: 1; min-width: 0; background: #41938a; overflow: hidden; }
.handle { position: absolute; left: 0; top: 240px; width: 5px; height: 22px; background: #383e3e; display: grid; place-items: center; }
.handle::before { content: ""; width: 4px; height: 4px; border-radius: 50%; background: #ccc; }
.model { position: absolute; inset: 0; width: 100%; height: 100%; }
.axis { font: bold 6px "Noto Sans", sans-serif; }
.axis.z { fill: #1828a8; }
.axis.x { fill: #7c4040; }
.hud { position: absolute; left: 30px; right: 30px; top: 8px; display: flex; justify-content: space-between; color: #43807a; }
.hud svg { width: 12px; height: 12px; opacity: .4; }
.hud .c { opacity: .85; }
.crumb { position: absolute; left: 2px; top: 26px; display: flex; align-items: center; gap: 2px; height: 12px; color: #12302d; white-space: nowrap; }
.crumb svg { width: 11px; height: 11px; }
.crumb .tri { width: 5px; height: 6px; margin-right: 5px; }
.sidetabs { position: absolute; right: 0; top: 33px; display: flex; flex-direction: column; gap: 1px; }
.sidetabs button { width: 15px; height: 14px; background: #2e3333; display: grid; place-items: center; }
.sidetabs .sel { background: #c0c4c4; }
.sidetabs svg { width: 11px; height: 11px; }
.lt { color: #e8e8e8; }

.task { flex: none; width: 30px; border-left: 2px solid #b7b3b0; box-shadow: -1px 0 #303b3a; overflow: hidden; white-space: nowrap; }
.collapse { display: block; width: 100%; height: 14px; padding-left: 5px; background: #adadad; }
.collapse svg { width: 9px; height: 9px; }
.task section { margin: 0 0 0 9px; padding: 0 0 15px; border-color: #707070; }
.task h3 { font: 600 7px/14px "Open Sans", sans-serif; }
.item { display: flex; align-items: center; gap: 3px; height: 17px; }
.item svg { width: 12px; height: 11px; }
.item.first { margin: 15px 0 14px 9px; }
.hm { color: #bfe0ee; }
.notes { position: absolute; left: 0; top: 0; width: 400px; height: 531px; pointer-events: none; }

.doctabs { display: flex; border-top: 1px solid #6a6a6a; line-height: 8px; white-space: nowrap; }
.blank { width: 17px; background: #c9c9c9; }
.nav { display: flex; width: 41px; background: #aaa; }
.nav button { width: 10px; border-right: 1px solid #999; display: grid; place-items: center; }
.nav svg { width: 6px; height: 6px; }
.doctabs a { padding: 0 6px; background: #2d2d2d; border-right: 1px solid #666; }
.doctabs .sel { background: #494949; font-weight: bold; border: 0; }
.sketchbar { display: flex; align-items: center; padding-left: 2px; color: #5f5f5f; }
.grip { width: 2px; height: 16px; border-left: 2px dotted #aaa; }
.sketchbar select { appearance: none; width: 61px; height: 14px; margin: 0 5px 0 6px; border: 0; border-radius: 0; background: #bdbdbd; }
.filter { width: 9px; margin-right: 9px; }
.sk { display: flex; gap: 6px; height: 18px; align-items: center; border-right: 1px solid #666; padding: 0 8px; }
.sk.first { padding-right: 16px; }
.sk svg { width: 11px; height: 11px; }
.status { display: flex; justify-content: space-between; padding: 2px 6px 0 1px; background: #949494; color: #e4e4e4; overflow: hidden; white-space: nowrap; }
```
